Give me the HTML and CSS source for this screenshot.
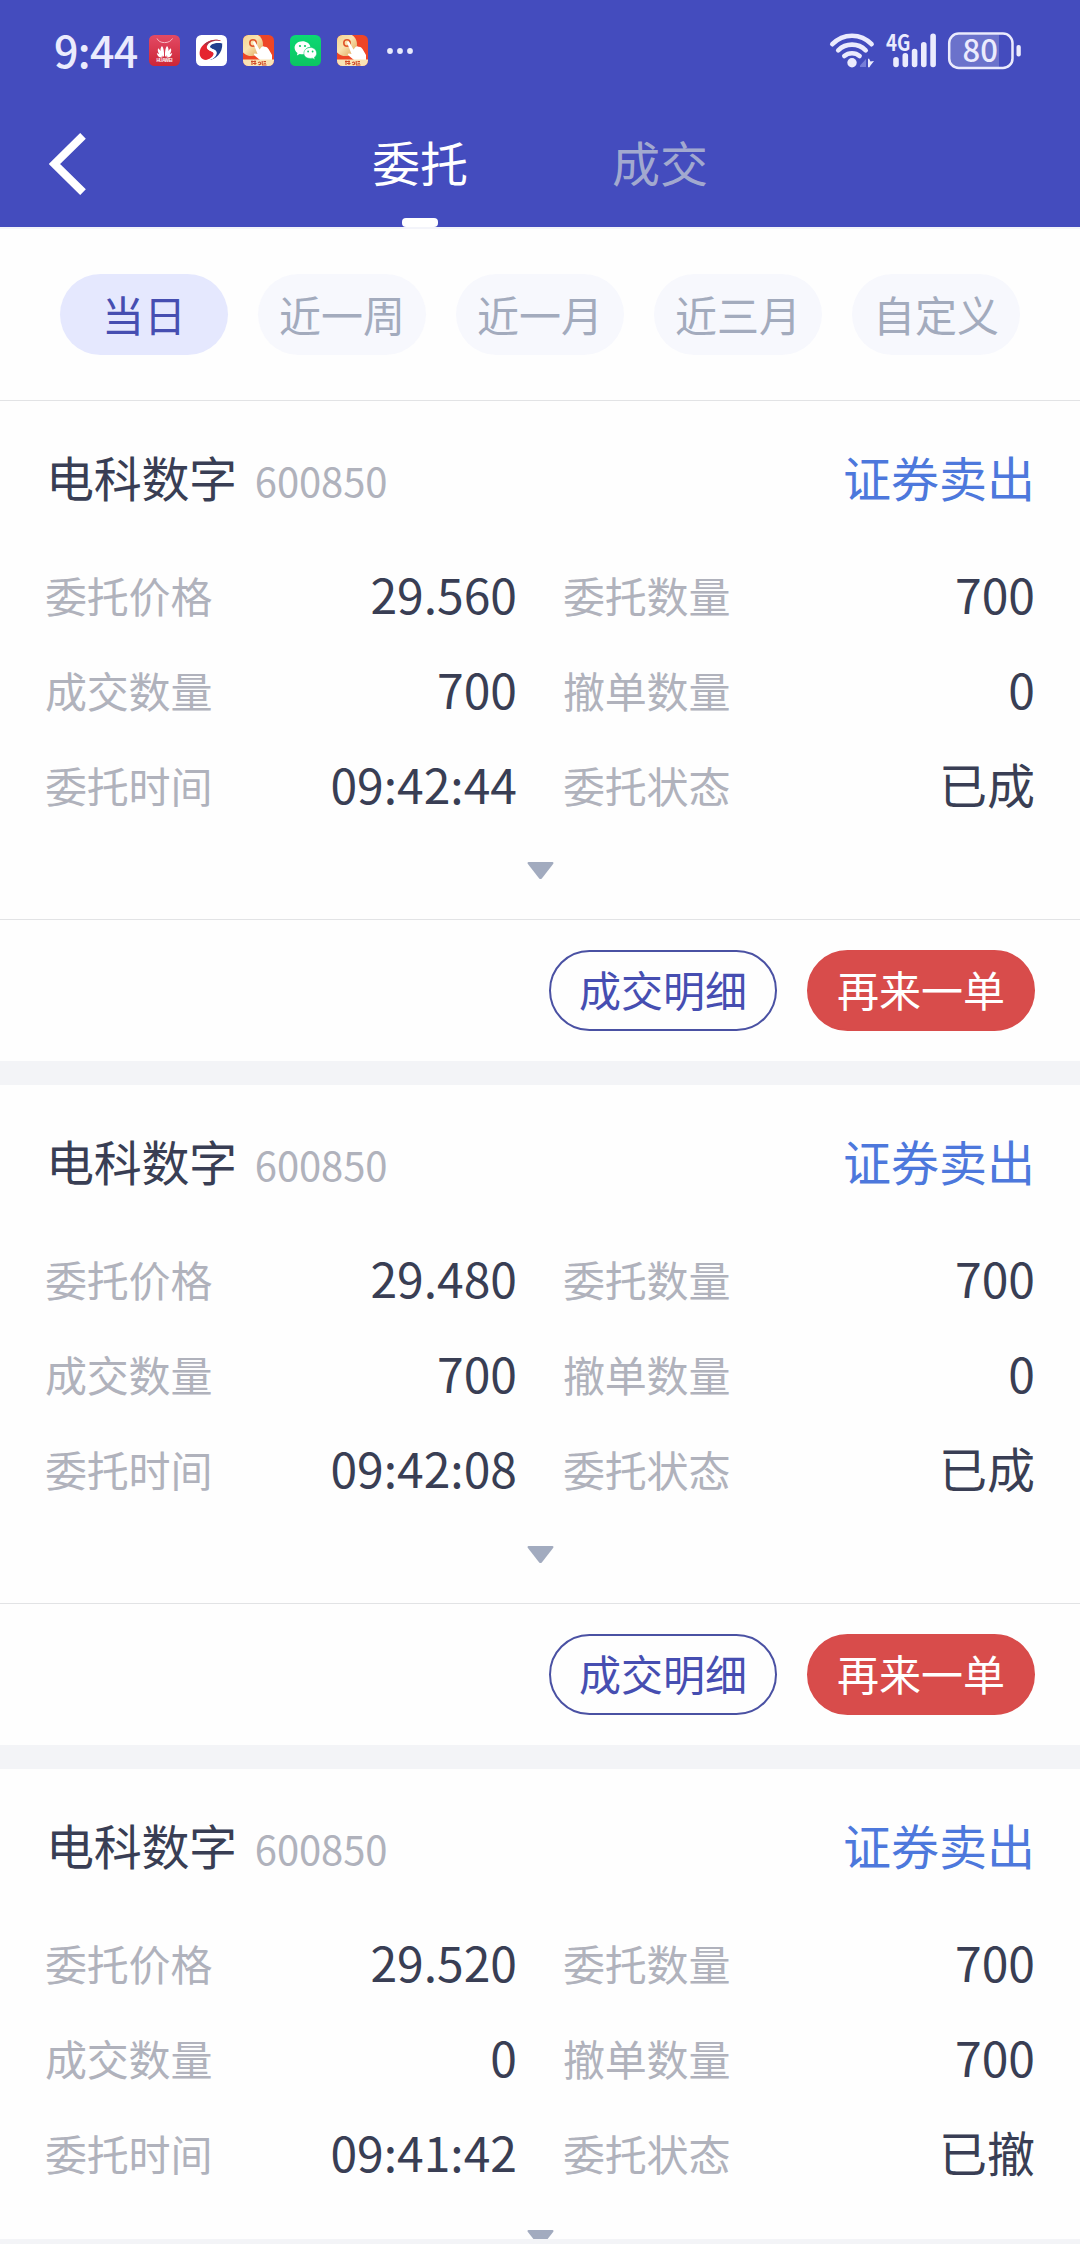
FILE: index.html
```html
<!DOCTYPE html>
<html lang="zh-CN">
<head>
<meta charset="utf-8">
<title>委托</title>
<link rel="stylesheet" href="styles.css">
</head>
<body>
<svg class="defs" width="0" height="0" aria-hidden="true">
  <defs>
    <linearGradient id="gold" x1="0" y1="0" x2="1" y2="1"><stop offset="0" stop-color="#f3cf88"/><stop offset=".5" stop-color="#fae3b0"/><stop offset="1" stop-color="#dc9f50"/></linearGradient>
    <linearGradient id="rose" x1="0" y1="0" x2="0" y2="1"><stop offset="0" stop-color="#e34a64"/><stop offset="1" stop-color="#cd2637"/></linearGradient>
    <linearGradient id="leaf" x1="0" y1="0" x2="0" y2="1"><stop offset="0" stop-color="#0cd873"/><stop offset="1" stop-color="#0cc562"/></linearGradient>
    <clipPath id="tile"><rect width="31" height="31" rx="5.5"/></clipPath>
    <symbol id="trade" viewBox="0 0 31 31">
      <g clip-path="url(#tile)">
        <rect width="31" height="31" fill="#ee4526"/>
        <circle cx="8.500" cy="9.500" r="11.500" fill="url(#gold)"/>
        <circle cx="10" cy="8" r="3.200" fill="none" stroke="#e0562c" stroke-width="1.600"/>
        <path d="M10 7.500Q11 5.500 12.600 7.500L16.500 14.500L18.500 12Q20 10.800 21.500 11.800Q24 11.500 25.500 14L29 20V25H17L11.500 20.500Q10 18.800 12 18.600L14.500 19Z" fill="#fff"/>
        <rect y="24.500" width="31" height="6.500" fill="#fae3b4"/>
        <path d="M8 26.500H13M9 25.500V30M12 25.500V30M10 28.500H13.500M15.200 28Q16.800 26 17.500 28T15.500 29.500M19.200 26V29.500M20.500 26.500H23M20.500 28.300H23M19 30H23.500" fill="none" stroke="#cf4a28" stroke-width="1.100"/>
      </g>
    </symbol>
  </defs>
</svg>
<header class="header">
  <div class="status">
    <span class="clock">9:44</span>
    <div class="apps">
      <svg viewBox="0 0 31 31"><rect width="31" height="31" rx="5.500" fill="url(#rose)"/><path d="M8 3.500Q10 7.600 15.500 7.600T23.500 3.500" fill="none" stroke="#f9b9c1" stroke-width="1"/><g fill="#fff"><path d="M15 22C11 18 10.500 13.500 13 11Q15.500 14 15 22ZM16 22C20 18 20.500 13.500 18 11Q15.500 14 16 22ZM14 22C9.500 19.500 8 16 9.200 13.200Q12.500 16 14 22ZM17 22C21.500 19.500 23 16 21.800 13.200Q18.500 16 17 22ZM13.500 22.400C10 22.800 8.200 21 7.800 18Q11.500 19 13.500 22.400ZM17.500 22.400C21 22.800 22.800 21 23.200 18Q19.500 19 17.500 22.400Z"/></g><text class="tiny" x="15.500" y="27.200" text-anchor="middle" textLength="16">HUAWEI</text></svg>
      <svg viewBox="0 0 31 31"><rect width="31" height="31" rx="5.500" fill="#fff"/><path d="M25.300 6.200C20 2.600 9 5.500 4.600 13.500C1.700 20.500 5.500 25.800 11.500 24.800C16 24 18.600 20.500 18.200 18.300C17 16.200 10.300 15.800 11.500 11.600C13 7.500 20.500 5.500 25.300 6.200Z" fill="#e5242f"/><path d="M8 9.500C13 4.800 20.500 3.400 25.300 6.200C20 5.500 14 7 11.800 10.800C10.500 9.800 9 9.500 8 9.500Z" fill="#a83246"/><path d="M26.200 8.200C20.500 6.600 14.500 8.400 13.400 11.400C13.200 14.200 20.800 13.800 20.400 17.900C20 21.500 15.500 24.300 12.300 25.300C19.500 24.800 27 18 26.200 8.200Z" fill="#213f8e"/><path d="M25.300 6.200C19 4.500 11.500 7 10.800 12C10.600 16.500 18.500 15.500 17.500 19.300C16.600 22.500 13 24.300 10.500 25C15 25.800 20.500 22.500 20.700 18C20.800 14 14 14.400 14 11.600C14.800 9 20 7 26.300 8.400Z" fill="#fff"/></svg>
      <svg><use href="#trade"/></svg>
      <svg viewBox="0 0 31 31"><rect width="31" height="31" rx="5.500" fill="url(#leaf)"/><path d="M12.400 6.200C7.900 6.200 4.600 9.100 4.600 12.700C4.600 14.900 5.800 16.700 7.500 17.900L6.900 20.600L9.700 18.900Q12.300 19.600 14.600 19C14 14.900 17 12 20.400 11.700C19.700 8.500 16.500 6.200 12.400 6.200Z" fill="#fff"/><path d="M20.400 12.500C16.600 12.500 13.900 14.900 13.900 18.200C13.900 21.400 17 24.200 22.500 23.200L24.900 24.500L24.400 22.200C25.900 21.200 26.600 19.800 26.600 18.200C26.600 14.900 23.900 12.500 20.400 12.500Z" fill="#fff" stroke="#0dcc6a" stroke-width=".5"/><g fill="#0dcc6a"><circle cx="10" cy="11" r="1.100"/><circle cx="15" cy="11" r="1.100"/><circle cx="18.100" cy="16.500" r=".9"/><circle cx="22.600" cy="16.500" r=".9"/></g></svg>
      <svg><use href="#trade"/></svg>
    </div>
    <svg class="more" viewBox="0 0 28 8" fill="#e8e9fb"><circle cx="4" cy="4" r="2.900"/><circle cx="14" cy="4" r="2.900"/><circle cx="24" cy="4" r="2.900"/></svg>
    <svg class="signals" viewBox="828 11 196 80">
      <g fill="none" stroke="#ebebfd" stroke-width="4.600" stroke-linecap="round">
        <path d="M832.300 44.200Q840.500 35.700 852 35.700T871.600 44.200"/>
        <path d="M838.200 50.300Q844 44.600 852 44.600T865.700 50.300"/>
        <path d="M844.300 56Q847.500 53.200 852 53.200T859.600 56"/>
      </g>
      <circle cx="852" cy="62.800" r="4.700" fill="#ebebfd"/>
      <path d="M866 59V67H860V65.500Z" fill="#777ed8"/>
      <path d="M868 59L869 58.500L870.500 61.500L874 61L870.500 65.500L869.500 67.200H868Z" fill="#ebebfd"/>
      <text class="net" x="886" y="50.500" textLength="24.500" lengthAdjust="spacingAndGlyphs">4G</text>
      <path d="M896 59.700V64.500M905.300 55.800V64.500M914.600 51.500V64.500M923.800 44.700V64.500M933.100 36.200V64.500" stroke="#ebebfd" stroke-width="5.600" stroke-linecap="round" fill="none"/>
      <path d="M958 34.500H999V67H958Q950 67 950 59V42.500Q950 34.500 958 34.500Z" fill="#6b72cb"/>
      <rect x="949.200" y="33.500" width="63.300" height="34.400" rx="9.500" fill="none" stroke="#ebebfd" stroke-width="2.500"/>
      <rect x="1016.500" y="45" width="4.300" height="11.500" rx="2" fill="#ebebfd"/>
      <text class="level" x="962.600" y="62.300">80</text>
    </svg>
  </div>
  <nav class="nav">
    <svg class="back" viewBox="0 0 38 62"><path d="M34 2.800L5.500 31L34 59.200" fill="none" stroke="#fff" stroke-width="8"/></svg>
    <a class="tab active">委托</a>
    <a class="tab">成交</a>
  </nav>
</header>
<div class="filters">
  <span class="chip on">当日</span><span class="chip">近一周</span><span class="chip">近一月</span><span class="chip">近三月</span><span class="chip">自定义</span>
</div>
<main class="list">
  <section class="order">
    <div class="body">
      <div class="title"><span class="name">电科数字</span><span class="code">600850</span><span class="side">证券卖出</span></div>
      <dl class="grid">
        <div class="cell"><dt>委托价格</dt><dd>29.560</dd></div><div class="cell"><dt>委托数量</dt><dd>700</dd></div>
        <div class="cell"><dt>成交数量</dt><dd>700</dd></div><div class="cell"><dt>撤单数量</dt><dd>0</dd></div>
        <div class="cell"><dt>委托时间</dt><dd>09:42:44</dd></div><div class="cell"><dt>委托状态</dt><dd>已成</dd></div>
      </dl>
      <svg class="expand" viewBox="0 0 27 18"><path d="M1.500 0H25.500Q27 .3 26.300 1.700L15 16.200Q13.500 18 12 16.200L.7 1.700Q0 .3 1.500 0Z"/></svg>
    </div>
    <div class="actions"><button class="btn">成交明细</button><button class="btn again">再来一单</button></div>
  </section>
  <section class="order">
    <div class="body">
      <div class="title"><span class="name">电科数字</span><span class="code">600850</span><span class="side">证券卖出</span></div>
      <dl class="grid">
        <div class="cell"><dt>委托价格</dt><dd>29.480</dd></div><div class="cell"><dt>委托数量</dt><dd>700</dd></div>
        <div class="cell"><dt>成交数量</dt><dd>700</dd></div><div class="cell"><dt>撤单数量</dt><dd>0</dd></div>
        <div class="cell"><dt>委托时间</dt><dd>09:42:08</dd></div><div class="cell"><dt>委托状态</dt><dd>已成</dd></div>
      </dl>
      <svg class="expand" viewBox="0 0 27 18"><path d="M1.500 0H25.500Q27 .3 26.300 1.700L15 16.200Q13.500 18 12 16.200L.7 1.700Q0 .3 1.500 0Z"/></svg>
    </div>
    <div class="actions"><button class="btn">成交明细</button><button class="btn again">再来一单</button></div>
  </section>
  <section class="order">
    <div class="body">
      <div class="title"><span class="name">电科数字</span><span class="code">600850</span><span class="side">证券卖出</span></div>
      <dl class="grid">
        <div class="cell"><dt>委托价格</dt><dd>29.520</dd></div><div class="cell"><dt>委托数量</dt><dd>700</dd></div>
        <div class="cell"><dt>成交数量</dt><dd>0</dd></div><div class="cell"><dt>撤单数量</dt><dd>700</dd></div>
        <div class="cell"><dt>委托时间</dt><dd>09:41:42</dd></div><div class="cell"><dt>委托状态</dt><dd>已撤</dd></div>
      </dl>
      <svg class="expand" viewBox="0 0 27 18"><path d="M1.500 0H25.500Q27 .3 26.300 1.700L15 16.200Q13.500 18 12 16.200L.7 1.700Q0 .3 1.500 0Z"/></svg>
    </div>
  </section>
</main>
</body>
</html>
```
FILE: styles.css
```css
* { box-sizing: border-box; margin: 0; padding: 0; }
body {
  display: flex;
  flex-direction: column;
  width: 1080px;
  height: 2244px;
  overflow: hidden;
  padding-bottom: 5px;
  background: #f3f4f7;
  color: #393e54;
  font-family: "Noto Sans CJK SC", sans-serif;
}
svg { display: block; flex: none; }
.defs { position: absolute; }

.header { flex: none; height: 227px; background: #444cbe; }
.status { display: flex; align-items: center; height: 101px; padding: 0 56px 0 54px; }
.clock { width: 95px; padding-bottom: 4px; font-size: 43px; font-weight: 500; line-height: 60px; letter-spacing: -0.7px; color: #ebebfd; }
.apps { display: flex; gap: 16px; }
.apps svg { width: 31px; height: 31px; }
.tiny { font: 700 4.5px "Liberation Sans", sans-serif; fill: #fff; }
.more { width: 28px; height: 8px; margin-left: 18px; }
.signals { width: 196px; height: 80px; margin-left: auto; }
.net { font-size: 22px; font-weight: 700; fill: #ebebfd; }
.level { font-size: 31px; font-weight: 500; fill: #ebebfd; }

.nav { display: flex; height: 126px; }
.back { width: 38px; height: 62px; margin: 32px 213px 0 49px; }
.tab {
  display: flex;
  flex-direction: column;
  align-items: center;
  width: 240px;
  font-size: 48px;
  line-height: 70px;
  padding-top: 25px;
  color: #a2a9cf;
}
.tab.active { color: #fff; }
.tab.active::after { content: ""; width: 36px; height: 9px; margin-top: auto; border-radius: 4px; background: #fff; }

.filters {
  display: flex;
  flex: none;
  gap: 30px;
  height: 174px;
  padding: 45px 60px 0;
  border-top: 2px solid #f3f4fa;
  border-bottom: 1px solid #e2e3e5;
  background: #fefefe;
}
.chip {
  width: 168px;
  height: 81px;
  border-radius: 41px;
  background: #f7f8fd;
  color: #a3abbd;
  font-size: 42px;
  line-height: 79px;
  text-align: center;
}
.chip.on { background: #e5e8fe; color: #464eb1; }

.list { flex: 1; min-height: 0; overflow: hidden; }
.order { height: 684px; border-bottom: 24px solid #f3f4f7; background: #fefefe; }
.body { height: 518px; padding: 40px 45px 0; }
.title { display: flex; height: 70px; line-height: 70px; font-size: 48px; }
.name { padding-left: 1px; letter-spacing: -0.3px; }
.code { margin: 4px 0 0 18px; font-size: 40px; letter-spacing: -0.1px; color: #b0b2bc; }
.side { margin-left: auto; color: #4d78dc; }
.grid { display: grid; grid-template-columns: 472px 472px; column-gap: 46px; grid-auto-rows: 95px; margin-top: 36px; }
.cell { display: flex; justify-content: space-between; align-items: center; }
.cell dt { font-size: 42px; letter-spacing: -0.2px; color: #b0b2bc; }
.cell dd { padding-bottom: 4px; font-size: 48px; line-height: 70px; }
.expand { width: 27px; height: 18px; margin: 30px auto 0; fill: #a2abbf; }
.actions { display: flex; justify-content: flex-end; gap: 30px; height: 142px; padding: 30px 45px 0; border-top: 1px solid #e2e3e5; }
.btn {
  width: 228px;
  height: 81px;
  padding-bottom: 3px;
  border: 2px solid #4a51a3;
  border-radius: 41px;
  background: none;
  color: #464eb1;
  font: 400 42px/74px "Noto Sans CJK SC", sans-serif;
}
.btn.again { border-color: #d84c4b; background: #d84c4b; color: #fff; }
```
